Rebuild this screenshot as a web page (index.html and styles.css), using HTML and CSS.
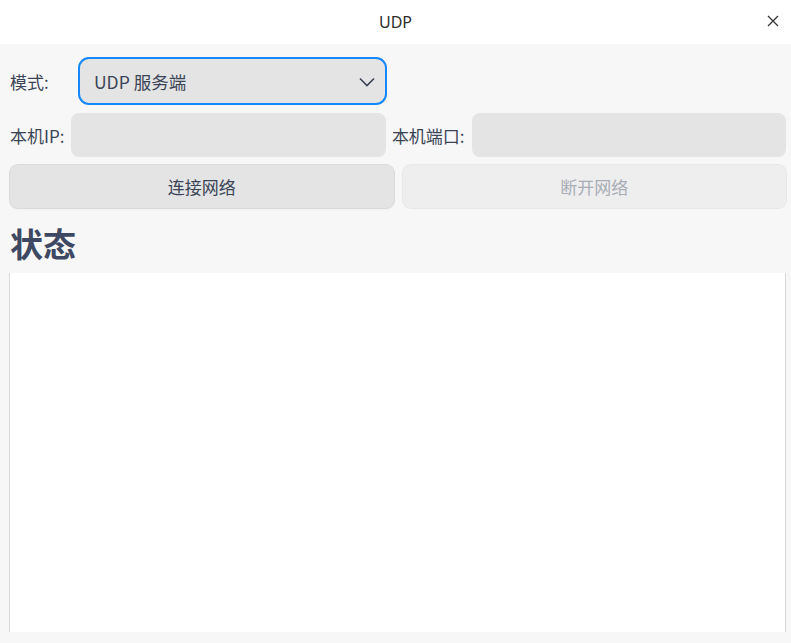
FILE: index.html
```html
<!DOCTYPE html>
<html lang="zh">
<head>
<meta charset="utf-8">
<title>UDP</title>
<link rel="stylesheet" href="styles.css">
</head>
<body>
<div class="window">
  <header class="titlebar">
    <span class="title">UDP</span>
    <span class="close">
      <svg width="12" height="12" viewBox="0 0 12 12"><path d="M1 1L11 11M11 1L1 11" stroke="#333" stroke-width="1.3" fill="none"/></svg>
    </span>
  </header>
  <main class="content">
    <div class="row mode-row">
      <label class="label mode-label">模式:</label>
      <div class="select">
        <span>UDP 服务端</span>
        <svg class="chev" width="16" height="10" viewBox="0 0 16 10"><path d="M1 1.5L8 8.5L15 1.5" stroke="#3b4457" stroke-width="1.6" fill="none"/></svg>
      </div>
    </div>
    <div class="row field-row">
      <label class="label">本机IP:</label>
      <div class="input"></div>
      <label class="label port-label">本机端口:</label>
      <div class="input"></div>
    </div>
    <div class="row btn-row">
      <button class="btn">连接网络</button>
      <button class="btn disabled">断开网络</button>
    </div>
    <h1 class="heading">状态</h1>
    <div class="log"></div>
  </main>
</div>
</body>
</html>
```
FILE: styles.css
```css
* { box-sizing: border-box; }
html, body { margin: 0; padding: 0; }
body {
  width: 791px;
  height: 643px;
  background: #f7f7f7;
  font-family: "Noto Sans CJK SC", "Noto Sans", sans-serif;
  color: #3b4457;
  overflow: hidden;
}
.window { display: flex; flex-direction: column; height: 643px; }
.titlebar {
  height: 44px;
  background: #ffffff;
  display: flex;
  align-items: center;
  justify-content: center;
  position: relative;
  flex: none;
}
.title { font-size: 16px; color: #2e2e2e; font-family: "Noto Sans", sans-serif; }
.close { position: absolute; right: 12px; top: 15px; width: 12px; height: 12px; display: flex; }
.content {
  flex: 1;
  display: flex;
  flex-direction: column;
  padding: 13px 5px 11px 10px;
}
.row { display: flex; align-items: center; }
.label { font-size: 17px; white-space: nowrap; color: #3b4457; }
.mode-row { height: 48px; }
.mode-label { width: 68px; }
.select {
  width: 309px;
  height: 48px;
  border: 2px solid #1488fc;
  border-radius: 11px;
  background: #e4e4e4;
  display: flex;
  align-items: center;
  justify-content: space-between;
  padding: 0 10px 0 14px;
  font-size: 17.5px;
  color: #3b4457;
}
.chev { margin-top: 1px; }
.field-row { margin-top: 8px; height: 44px; }
.input {
  flex: 1;
  height: 44px;
  background: #e4e4e4;
  border-radius: 8px;
  margin-left: 7px;
}
.port-label { margin-left: 6px; }
.btn-row { margin-top: 8px; gap: 9px; }
.btn {
  flex: 1;
  height: 43px;
  border: none;
  border-radius: 8px;
  background: #e4e4e4;
  box-shadow: 0 0 0 1px #dadada, 0 1px 2px rgba(0,0,0,0.08);
  font-family: inherit;
  font-size: 17px;
  color: #3b4457;
}
.btn.disabled {
  background: #eeeeee;
  color: #a9adb6;
  box-shadow: 0 0 0 1px #e8e8e8;
}
.heading {
  margin: 13px 0 0 0;
  font-size: 33px;
  line-height: 44px;
  font-weight: 700;
  color: #3e4862;
}
.log {
  flex: 1;
  margin-top: 8px;
  margin-left: -1px;
  background: #ffffff;
  border-left: 1px solid #d8d8d8;
  border-right: 1px solid #d8d8d8;
}
```
